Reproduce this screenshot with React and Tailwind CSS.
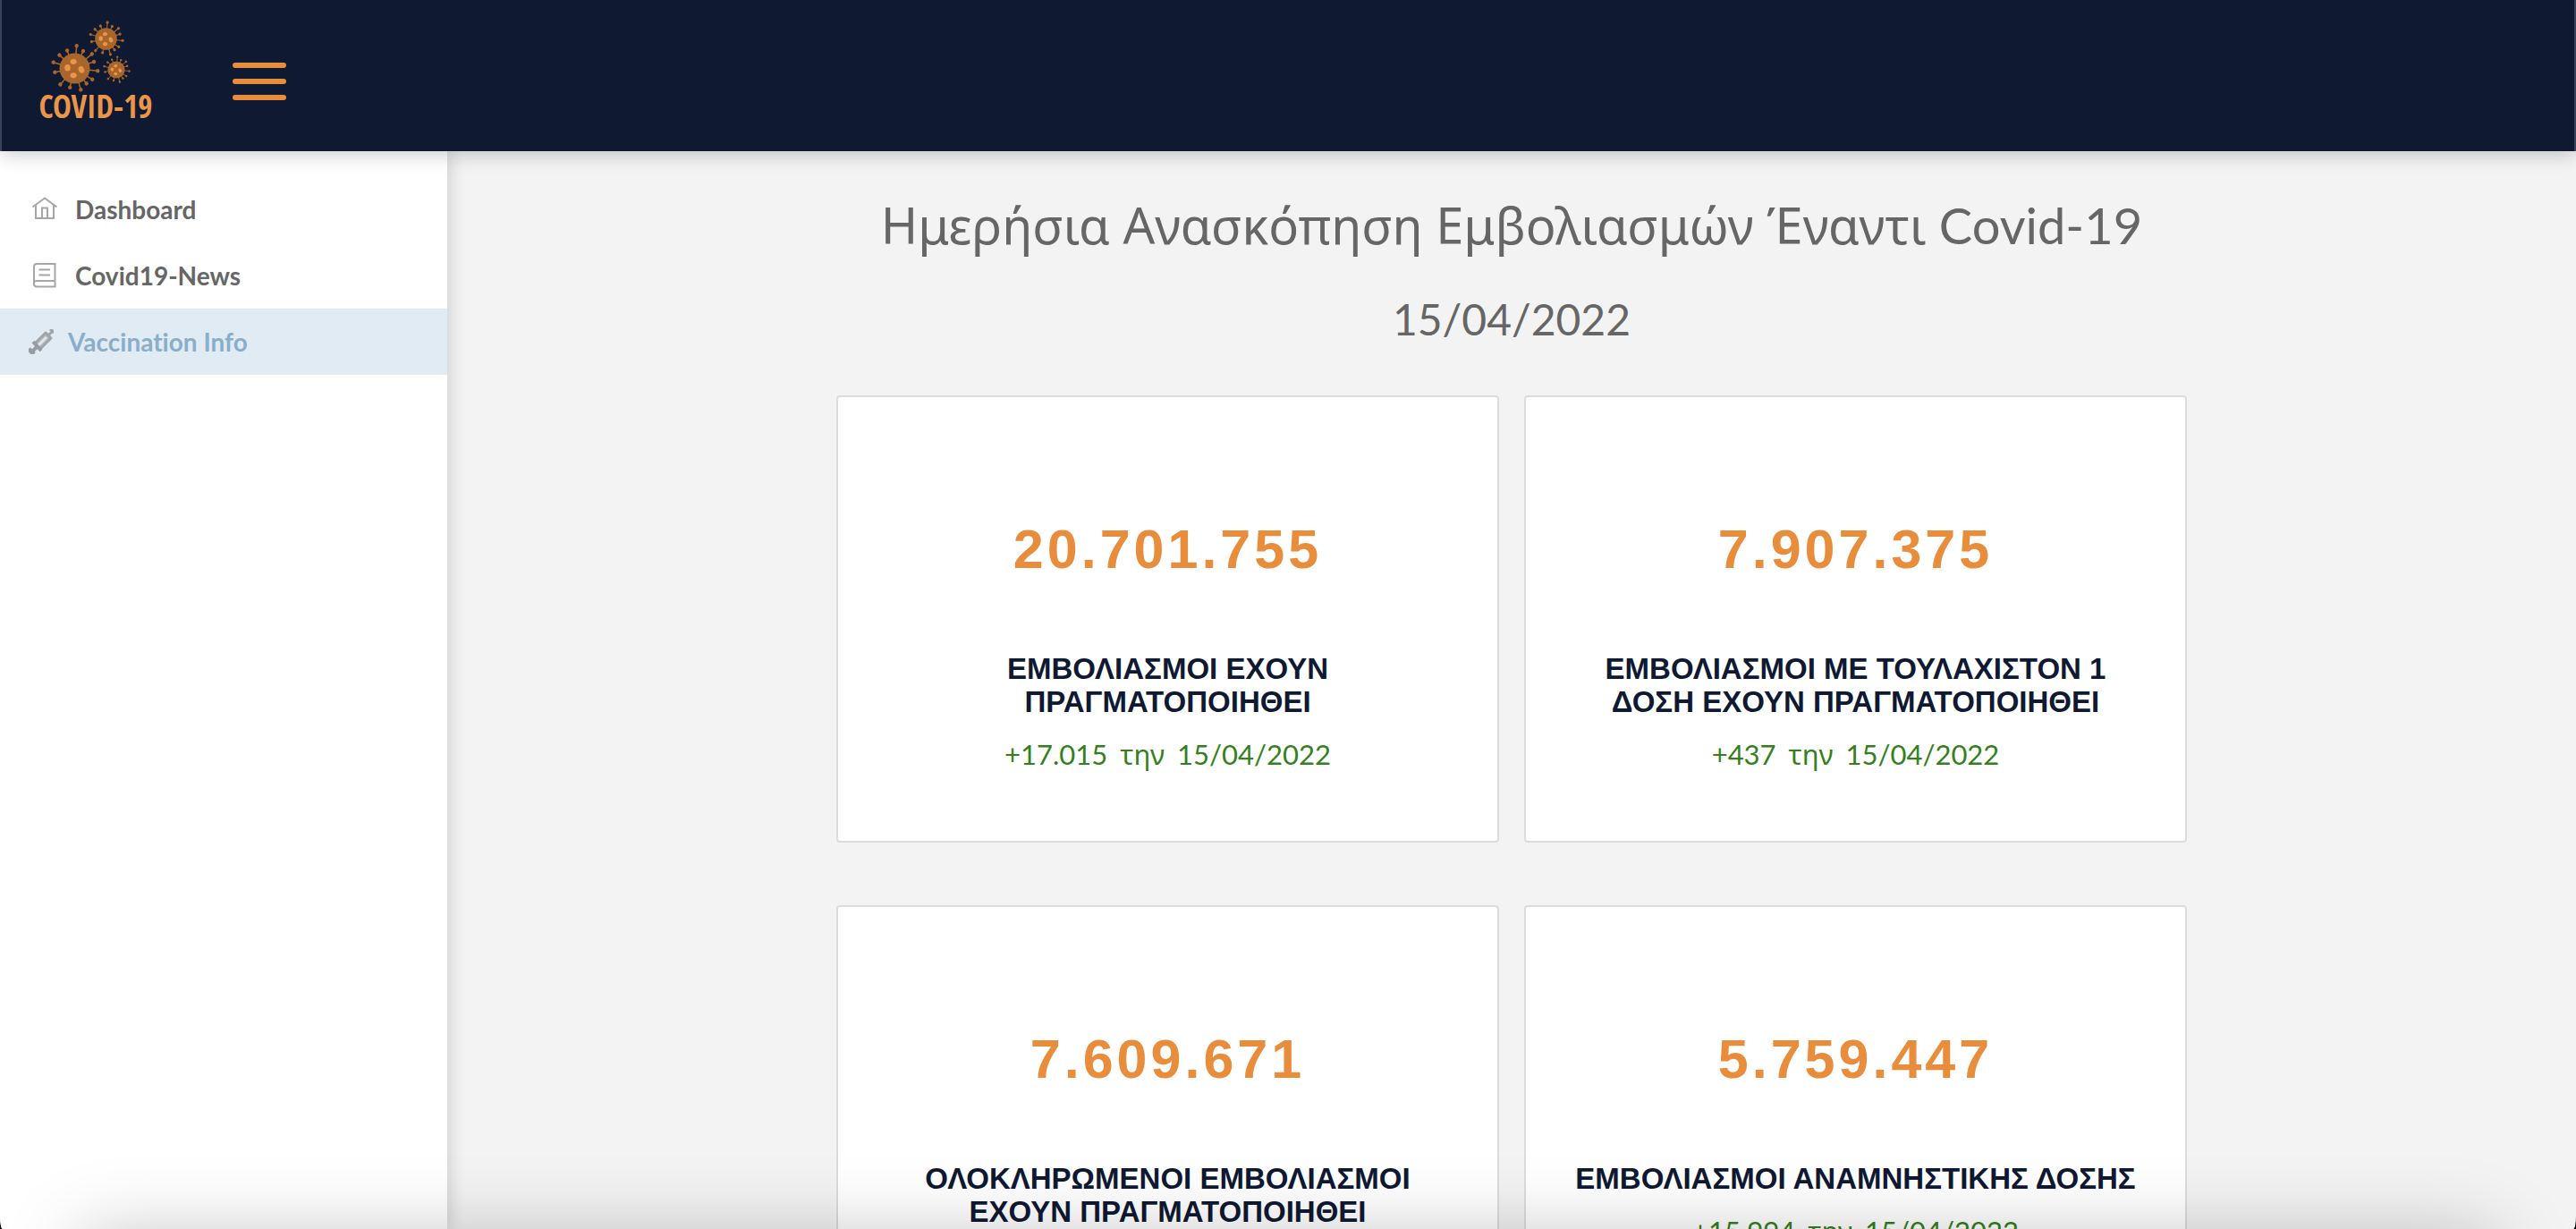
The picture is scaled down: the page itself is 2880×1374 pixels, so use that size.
const cards = [
  { value: "20.701.755", label: "ΕΜΒΟΛΙΑΣΜΟΙ ΕΧΟΥΝ ΠΡΑΓΜΑΤΟΠΟΙΗΘΕΙ", delta: "+17.015" },
  { value: "7.907.375", label: "ΕΜΒΟΛΙΑΣΜΟΙ ΜΕ ΤΟΥΛΑΧΙΣΤΟΝ 1 ΔΟΣΗ ΕΧΟΥΝ ΠΡΑΓΜΑΤΟΠΟΙΗΘΕΙ", delta: "+437" },
  { value: "7.609.671", label: "ΟΛΟΚΛΗΡΩΜΕΝΟΙ ΕΜΒΟΛΙΑΣΜΟΙ ΕΧΟΥΝ ΠΡΑΓΜΑΤΟΠΟΙΗΘΕΙ", delta: "+577" },
  { value: "5.759.447", label: "ΕΜΒΟΛΙΑΣΜΟΙ ΑΝΑΜΝΗΣΤΙΚΗΣ ΔΟΣΗΣ", delta: "+15.994" },
];

/* Spikes as [angle in degrees clockwise from the top, length relative to the body radius]. */
const spikes = [
  [5, 1.5], [26, 1.27], [50, 1.48], [71, 1.34], [96, 1.52], [122, 1.37],
  [142, 1.26], [164, 1.46], [194, 1.29], [222, 1.42], [259, 1.33],
  [286, 1.46], [311, 1.33], [337, 1.28],
];

function Virus({ x, y, r }) {
  return (
    <g transform={`translate(${x} ${y}) scale(${r / 10})`}>
      <circle r="10" fill="#a8662c" />
      {spikes.map(([a, l]) => (
        <g key={a} transform={`rotate(${a})`}>
          <path d={`M0 0V${-l * 10}`} stroke="#a8662c" strokeWidth="0.9" />
          <circle cy={-l * 10} r="1.3" fill="#a8662c" />
        </g>
      ))}
      <ellipse cx="-0.2" cy="-4.5" rx="2.1" ry="1.7" fill="#ea964a" transform="rotate(-8)" />
      <ellipse cx="-4.7" cy="-0.4" rx="1.9" ry="2.2" fill="#ea964a" />
      <ellipse cx="4.4" cy="0.8" rx="1.8" ry="2.4" fill="#ea964a" transform="rotate(-25 4.4 0.8)" />
      <ellipse cx="-0.8" cy="4.6" rx="2.1" ry="1.8" fill="#ea964a" />
    </g>
  );
}

function Logo() {
  return (
    <svg width="136" height="120" viewBox="0 0 136 120" aria-label="COVID-19" role="img">
      <Virus x="80.5" y="20.5" r="12.3" />
      <Virus x="45.5" y="53.5" r="17" />
      <Virus x="92" y="55" r="9.6" />
      <text x="69" y="109" textAnchor="middle" fontFamily="Open Sans Condensed, Roboto Condensed, Roboto, sans-serif" fontWeight="700" fontSize="35" fill="#ea964a">
        COVID-19
      </text>
    </svg>
  );
}

function HomeIcon() {
  return (
    <svg width="28" height="28" viewBox="0 0 28 28" fill="none" stroke="#a6a6a6" strokeWidth="2">
      <path d="M0.5 11.5 14 1.5 27.5 11.5M4 9.5V24H24V9.5M11 24V12.5H17V24" />
    </svg>
  );
}

function BookIcon() {
  return (
    <svg width="28" height="28" viewBox="0 0 28 28" fill="none" stroke="#a6a6a6" strokeWidth="2">
      <path d="M25.5 20H5a3 3 0 0 0 0 6.5H25.5V1H5A3 3 0 0 0 2 4V23M7.5 7.5H20M7.5 13.5H20" />
    </svg>
  );
}

function SyringeIcon() {
  return (
    <svg width="28" height="28" viewBox="0 0 28 28" fill="none">
      <path d="M7 16 19 4 25 10 13 22Z" fill="#b4bcc2" stroke="#a0a5a9" strokeWidth="3" strokeLinejoin="round" />
      <path d="M11 18 20 9" stroke="#dfe6eb" strokeWidth="3" />
      <path d="M22 7 28 1M24 0 28 4" stroke="#a0a5a9" strokeWidth="3" />
      <path d="M5 14 14 24M9 20 3 26" stroke="#979ca0" strokeWidth="4" />
      <path d="M0 22 6 28" stroke="#979ca0" strokeWidth="5" />
    </svg>
  );
}

export default function App() {
  return (
    <div className="h-screen bg-black">
      <div className="relative flex h-full flex-col overflow-hidden bg-[#f3f3f3] font-['Lato','Open_Sans',sans-serif] text-[#666] [border-bottom-left-radius:3px_14px] [border-bottom-right-radius:3px_14px] [font-variant-ligatures:none]">
        <header className="relative z-10 flex h-[169px] shrink-0 items-start gap-[86px] border-x-2 border-[#3b435a] bg-[#0f1932] pl-[36px] pt-[23px] shadow-[0_4px_20px_rgba(0,0,0,0.2)]">
          <Logo />
          <button type="button" aria-label="Menu" className="mt-[47px] flex flex-col gap-[12px]">
            <span className="h-[6px] w-[60px] rounded-full bg-[#e88d3c]" />
            <span className="h-[6px] w-[60px] rounded-full bg-[#e88d3c]" />
            <span className="h-[6px] w-[60px] rounded-full bg-[#e88d3c]" />
          </button>
        </header>

        <div className="flex min-h-0 grow">
          <nav className="w-[500px] shrink-0 bg-white pt-[28px] text-[28px] font-bold shadow-[0_0_20px_rgba(0,0,0,0.2)]">
            <a href="#dashboard" className="flex h-[74px] items-center gap-[20px] pl-[36px]">
              <HomeIcon />
              Dashboard
            </a>
            <a href="#news" className="flex h-[74px] items-center gap-[20px] pl-[36px]">
              <BookIcon />
              Covid19-News
            </a>
            <a href="#vaccination" className="flex h-[74px] items-center gap-[16px] bg-[#e0ebf4] pl-[32px] text-[#8aaeca]">
              <SyringeIcon />
              Vaccination Info
            </a>
          </nav>

          <main className="grow text-center">
            <h1 className="mt-[46px] text-[56px] leading-[72px]">
              <span className="font-['Noto_Sans',sans-serif]">Ημερήσια Ανασκόπηση Εμβολιασμών Έναντι</span> Covid-19
            </h1>
            <h2 className="mt-[37px] text-[48px] leading-[64px]">15/04/2022</h2>
            <div className="mx-auto mt-[53px] grid max-w-[1510px] grid-cols-2 gap-x-[28px] gap-y-[70px]">
              {cards.map((c) => (
                <section key={c.value} className="flex h-[500px] flex-col items-center rounded-[4px] border-2 border-[#dcdcdc] bg-white px-[40px] pt-[134px]">
                  <p className="font-['Liberation_Sans',sans-serif] text-[61px] leading-[72px] font-bold tracking-[4px] text-[#e88d3c]">{c.value}</p>
                  <h3 className="mt-[79px] font-['Liberation_Sans',sans-serif] text-[33px] leading-[37px] font-bold text-[#0f1932]">{c.label}</h3>
                  <p className="mt-[20px] flex gap-[14px] text-[31px] leading-[40px] text-[#357f20]">
                    <span>{c.delta}</span>
                    <span className="font-['Noto_Sans',sans-serif]">την</span>
                    <span>15/04/2022</span>
                  </p>
                </section>
              ))}
            </div>
          </main>
        </div>

        <div className="pointer-events-none absolute inset-x-[90px] -bottom-[310px] z-20 h-[300px] shadow-[0_0_80px_rgba(0,0,0,0.25)]" />
      </div>
    </div>
  );
}
